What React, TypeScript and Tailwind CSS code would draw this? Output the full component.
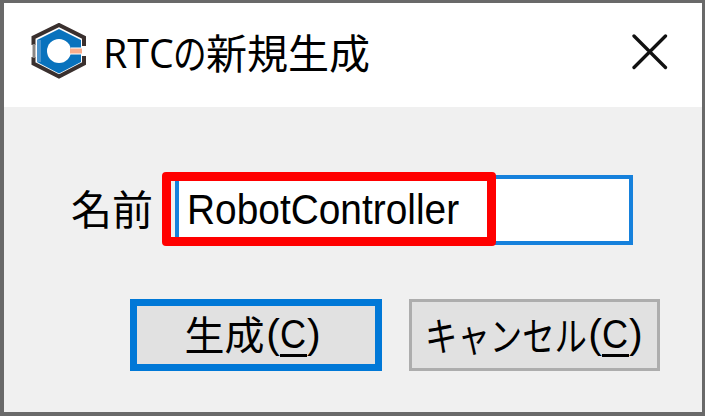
const jp = "font-['Noto_Sans_CJK_JP',sans-serif]";
const latin = "font-['Liberation_Sans',sans-serif]";

function AppIcon() {
  return (
    <svg viewBox="0 0 56 56" className="h-14 w-14 shrink-0">
      <path d="M53 23V14.500L28 2L2.500 14.500V22M2.500 34V40.500L28 53.500L53 40.500V33" fill="none" stroke="#3a302e" strokeWidth="4" />
      <path d="M3 21V35" stroke="#8a8786" strokeWidth="3" />
      <path d="M28 6L50 17V39L28 50.500L6 39V17Z" fill="#0872bd" />
      <path d="M8 17V39" stroke="#4b94cd" strokeWidth="4" />
      <circle cx="28" cy="28" r="12" fill="#fff" />
      <path d="M40 24.500H56V31.500H38Z" fill="#fff" />
      <path d="M39 28H51" stroke="#f9ad8c" strokeWidth="5" />
    </svg>
  );
}

function Mnemonic() {
  return (
    <span className={`${latin} flex h-12 items-center pb-[2px] text-[41px] leading-[48px]`}>
      <span className="w-[14px]">(</span>
      <span className="relative w-[27px]">
        <span className="block origin-left scale-x-[0.88]">C</span>
        <span className="absolute bottom-[1px] left-0 h-[3px] w-[27px] bg-black" />
      </span>
      <span className="w-[13px]">)</span>
    </span>
  );
}

export default function App() {
  return (
    <div className={`${jp} flex h-[416px] w-[705px] flex-col overflow-hidden border-4 border-t-[3px] border-r-[3px] border-[#696969] bg-[#f0f0f0] text-black`}>
      <header className="flex h-[104px] shrink-0 items-start bg-white pr-[34px] pl-[27px]">
        <div className="pt-[20px]"><AppIcon /></div>
        <h1 className="ml-[16px] flex h-[60px] pt-[18px] text-[41px] leading-[60px]">
          <span className="w-[70px] pt-[1px] font-['Open_Sans',sans-serif]">
            <span className="block origin-left scale-x-[0.96]">RTC</span>
          </span>
          <span className="w-[33px]"><span className="block origin-left scale-x-[0.82]">の</span></span>
          <span>新規生成</span>
        </h1>
        <button className="mt-[31px] ml-auto" aria-label="閉じる">
          <svg viewBox="0 0 36 36" className="h-9 w-9">
            <path d="M2 2L33.500 33.500M33.500 2L2 33.500" stroke="#111" strokeWidth="3.300" strokeLinecap="round" />
          </svg>
        </button>
      </header>
      <main className="flex flex-col">
        <div className="flex pt-[68px] pl-[67px]">
          <label htmlFor="name" className="flex h-[70px] w-[104px] items-center pb-[6px] text-[41px] leading-none">名前</label>
          <div id="name" className={`${latin} relative flex h-[70px] w-[458px] items-center border-4 border-[#1681dc] bg-white pb-[2px] pl-[8px] text-[42px]`}>
            <span className="origin-left scale-x-[0.925]">RobotController</span>
            <span className="absolute -top-[7px] -left-[17px] h-[74px] w-[334px] rounded-[4px] border-[9px] border-[#ff0000]" />
          </div>
        </div>
        <div className="flex gap-[27px] pt-[54px] pl-[126px]">
          <button className="flex h-[72px] w-[252px] items-center border-[7px] border-[#0078d7] bg-[#e1e1e1] pl-[46px] text-[40px] leading-[48px]">
            <span className="w-[83px] pb-[5px]">生成</span>
            <Mnemonic />
          </button>
          <button className="flex h-[72px] w-[251px] items-center border-[3px] border-[#adadad] bg-[#e1e1e1] pl-[13px] text-[40px] leading-[48px]">
            <span className="w-[163px] pb-[3px] whitespace-nowrap"><span className="block origin-left scale-x-[0.81]">キャンセル</span></span>
            <Mnemonic />
          </button>
        </div>
      </main>
    </div>
  );
}
